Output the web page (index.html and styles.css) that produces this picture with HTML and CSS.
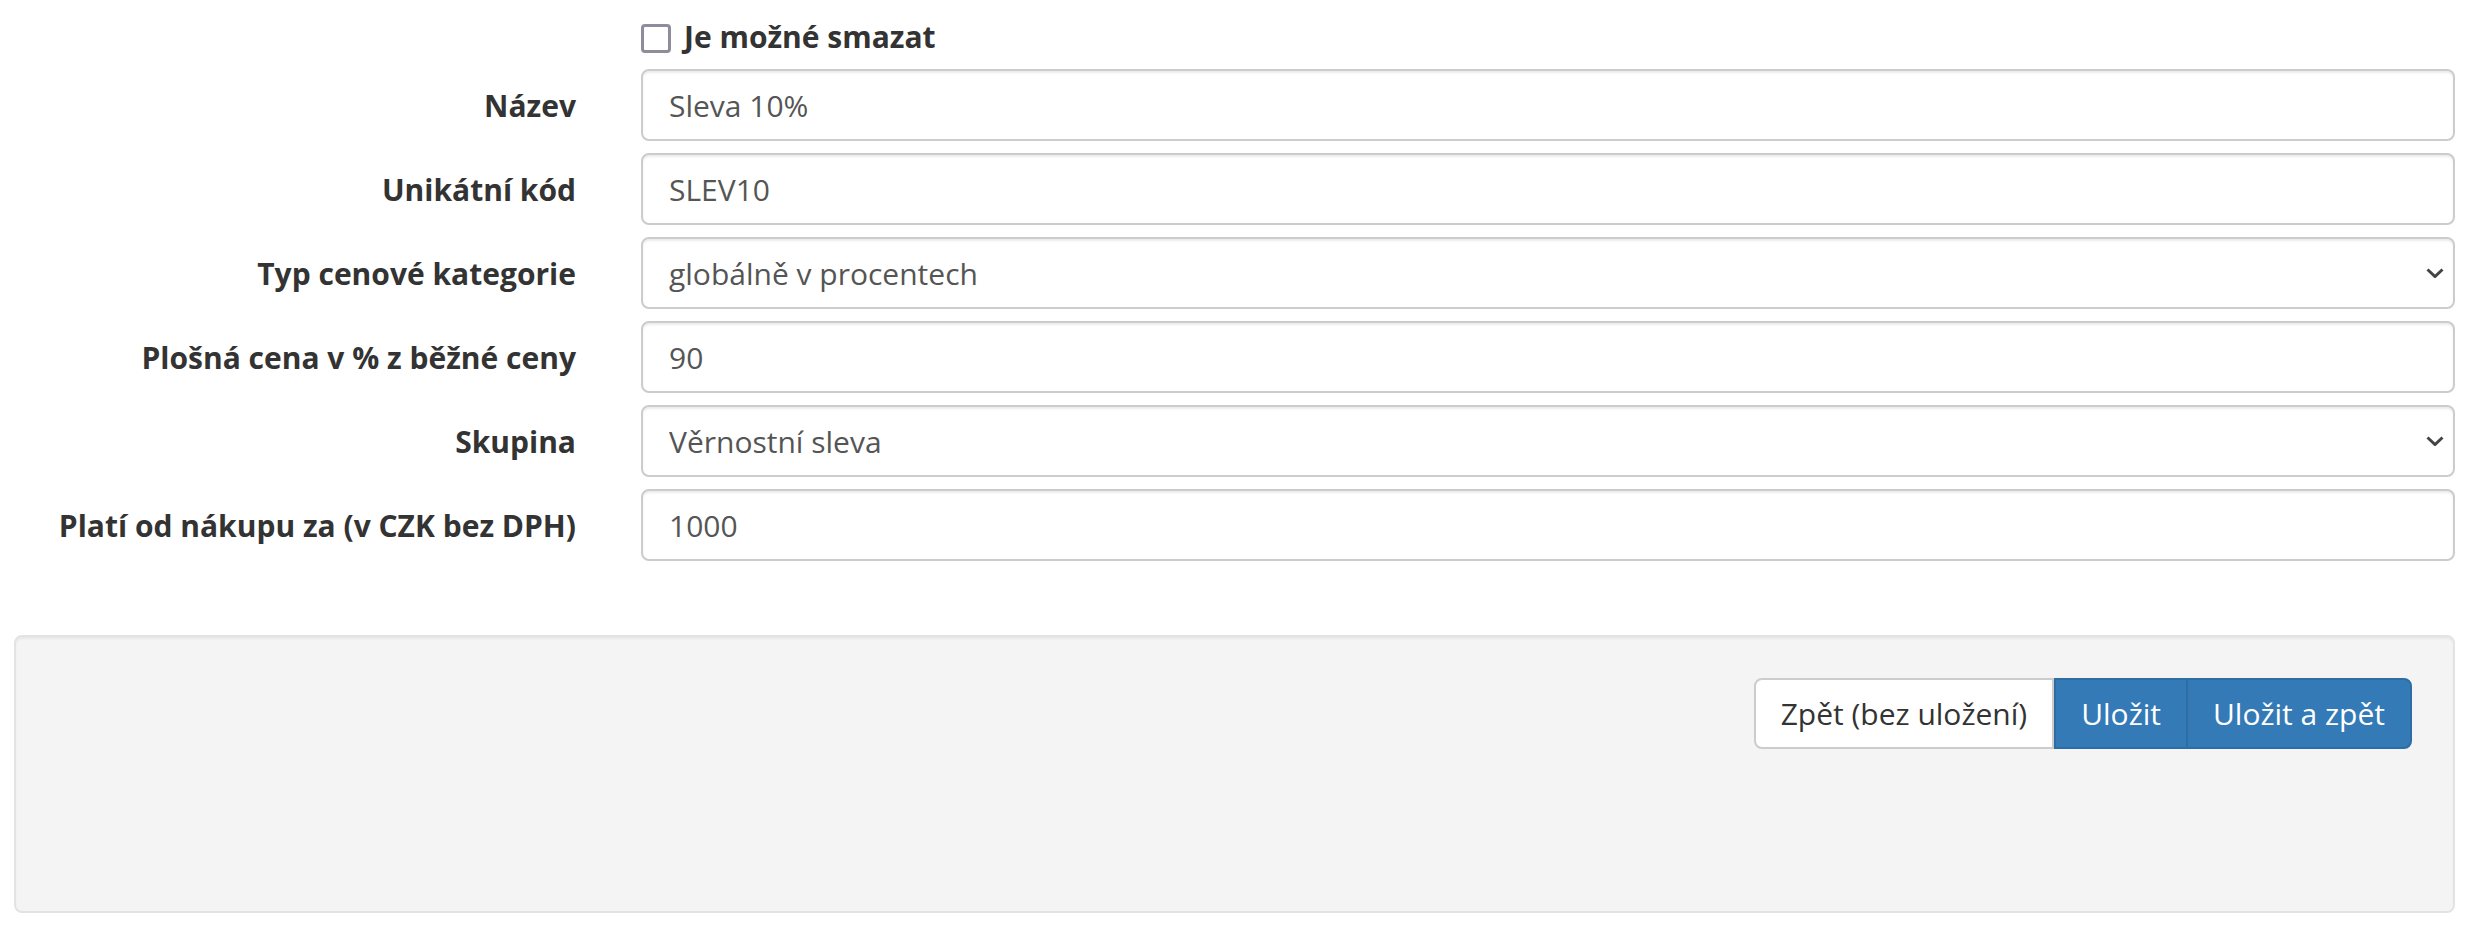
FILE: index.html
```html
<!DOCTYPE html>
<html lang="cs">
<head>
<meta charset="utf-8">
<title>Cenová kategorie</title>
<link rel="stylesheet" href="styles.css">
</head>
<body>
<form class="form">
  <div class="row check-row">
    <div class="label-col"></div>
    <label class="check"><input type="checkbox" class="check-box"><span>Je možné smazat</span></label>
  </div>
  <div class="row">
    <label class="label-col">Název</label>
    <input class="control" type="text" value="Sleva 10%">
  </div>
  <div class="row">
    <label class="label-col">Unikátní kód</label>
    <input class="control" type="text" value="SLEV10">
  </div>
  <div class="row">
    <label class="label-col">Typ cenové kategorie</label>
    <div class="select-wrap">
      <select class="control select"><option>globálně v procentech</option></select>
      <svg class="chevron" viewBox="0 0 18 10" width="18" height="10"><path d="M1.5 1.5 L9 8.5 L16.5 1.5" fill="none" stroke="#444" stroke-width="3"/></svg>
    </div>
  </div>
  <div class="row">
    <label class="label-col">Plošná cena v % z běžné ceny</label>
    <input class="control" type="text" value="90">
  </div>
  <div class="row">
    <label class="label-col">Skupina</label>
    <div class="select-wrap">
      <select class="control select"><option>Věrnostní sleva</option></select>
      <svg class="chevron" viewBox="0 0 18 10" width="18" height="10"><path d="M1.5 1.5 L9 8.5 L16.5 1.5" fill="none" stroke="#444" stroke-width="3"/></svg>
    </div>
  </div>
  <div class="row">
    <label class="label-col">Platí od nákupu za (v CZK bez DPH)</label>
    <input class="control" type="text" value="1000">
  </div>
</form>
<div class="well">
  <div class="btn-group">
    <button class="btn btn-default" type="button">Zpět (bez uložení)</button>
    <button class="btn btn-primary" type="button">Uložit</button>
    <button class="btn btn-primary btn-last" type="button">Uložit a zpět</button>
  </div>
</div>
</body>
</html>
```

FILE: styles.css
```css
* { box-sizing: border-box; }
html, body { margin: 0; padding: 0; background: #fff; }
body {
  font-family: "Open Sans", "Noto Sans", sans-serif;
  font-size: 30px;
  color: #333;
}
.form { padding-top: 18px; }
.row {
  display: grid;
  grid-template-columns: 576px 1fr;
  column-gap: 65px;
  align-items: center;
  padding-right: 19px;
  margin-bottom: 12px;
}
.label-col {
  text-align: right;
  font-weight: 700;
  color: #333;
  white-space: nowrap;
}
.check-row { height: 40px; margin-bottom: 11px; }
.check {
  display: flex;
  align-items: center;
  gap: 13px;
  font-weight: 700;
  color: #333;
}
.check span { position: relative; top: -2px; }
.check-box {
  appearance: none;
  -webkit-appearance: none;
  margin: 0;
  width: 30px;
  height: 29px;
  border: 3px solid #8f8c9c;
  border-radius: 4px;
  background: #fff;
}
.control {
  display: block;
  width: 100%;
  height: 72px;
  margin: 0;
  padding: 0 26px;
  font-family: "Open Sans", "Noto Sans", sans-serif;
  font-size: 30px;
  color: #555;
  background: #fff;
  border: 2px solid #ccc;
  border-radius: 8px;
  box-shadow: inset 0 2px 2px rgba(0,0,0,.075);
  outline: none;
}
.select-wrap { position: relative; }
.select {
  appearance: none;
  -webkit-appearance: none;
  padding-right: 60px;
}
.chevron {
  position: absolute;
  right: 11px;
  top: 50%;
  margin-top: -5px;
  pointer-events: none;
}
.well {
  margin: 74px 19px 0 14px;
  height: 278px;
  background: #f4f4f4;
  border: 2px solid #e3e3e3;
  border-radius: 8px;
  box-shadow: inset 0 2px 2px rgba(0,0,0,.05);
  padding: 41px 41px 0 0;
  display: flex;
  justify-content: flex-end;
  align-items: flex-start;
}
.btn-group { display: flex; }
.btn {
  height: 71px;
  margin: 0;
  padding: 0 25px;
  font-family: "Open Sans", "Noto Sans", sans-serif;
  font-size: 30px;
  font-weight: 400;
  border: 2px solid;
  border-radius: 0;
  cursor: pointer;
}
.btn-default {
  background: #fff;
  color: #333;
  border-color: #ccc;
  border-radius: 8px 0 0 8px;
}
.btn-primary {
  background: #337ab7;
  color: #fff;
  border-color: #2e6da4;
}
.btn-primary + .btn-primary { border-left-color: #2e6da4; margin-left: -2px; }
.btn-last { border-radius: 0 8px 8px 0; }
```
